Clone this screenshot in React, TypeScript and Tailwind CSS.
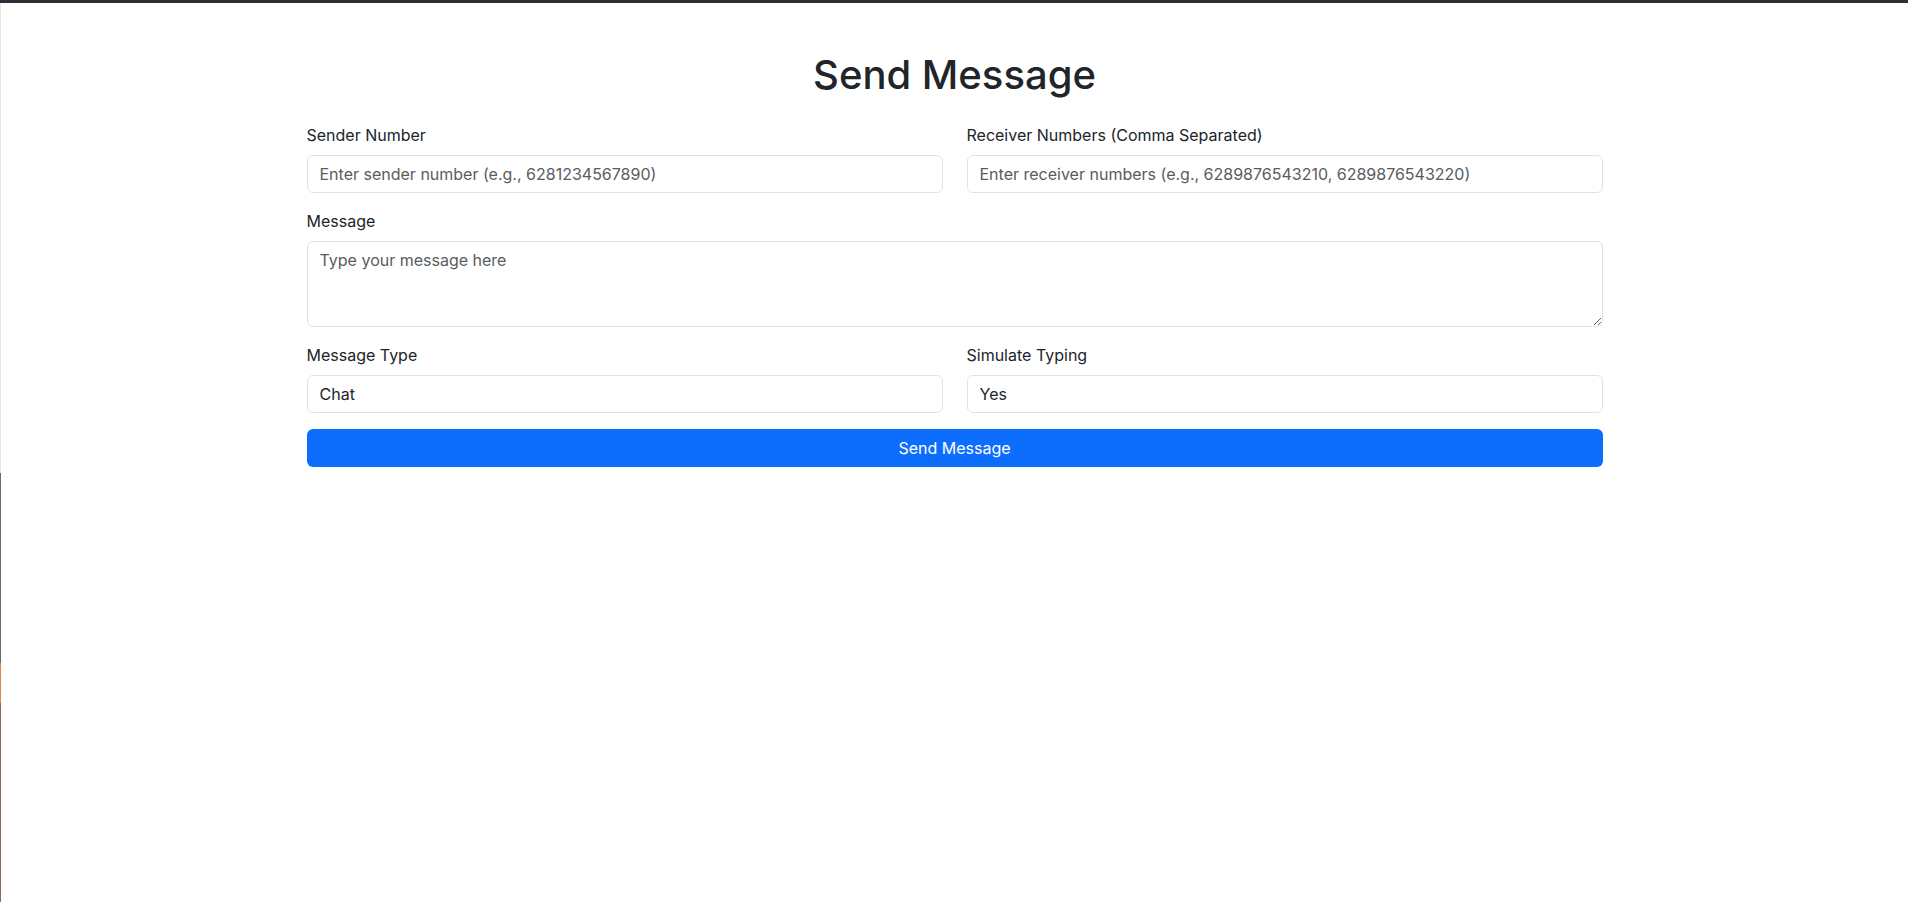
import React from "react";

const inputCls =
  "block w-full h-[38px] rounded-[6px] border border-[#dee2e6] bg-white px-3 py-1.5 text-base leading-6 text-[#212529] placeholder:text-[#595c5f] outline-none";

function Field({ label, children }: { label: string; children: React.ReactNode }) {
  return (
    <div className="mb-4">
      <label className="block mb-2 text-base leading-6">{label}</label>
      {children}
    </div>
  );
}

export default function App() {
  return (
    <div className="min-h-screen flex flex-col bg-white text-[#212529] font-['Inter','Liberation_Sans',sans-serif]">
      {/* window top edge */}
      <div className="h-[3px] bg-[#2e2f37]" />
      <div className="flex flex-1">
        {/* desktop peeking through on the left */}
        <div className="w-px flex flex-col">
          <div className="h-[470px] bg-[#f2e3d0]" />
          <div className="h-[190px] bg-[#6b6a66]" />
          <div className="h-[40px] bg-[#d9884f]" />
          <div className="flex-1 bg-[#8a6a58]" />
        </div>

        <main className="flex-1">
          <div className="mx-auto max-w-[1320px] px-3 pt-12">
            <h1 className="mb-6 text-center text-[40px] leading-[1.2] font-medium">
              Send Message
            </h1>

            <form onSubmit={(e) => e.preventDefault()}>
              <div className="grid grid-cols-2 gap-x-6">
                <Field label="Sender Number">
                  <input
                    className={inputCls}
                    placeholder="Enter sender number (e.g., 6281234567890)"
                  />
                </Field>
                <Field label="Receiver Numbers (Comma Separated)">
                  <input
                    className={inputCls}
                    placeholder="Enter receiver numbers (e.g., 6289876543210, 6289876543220)"
                  />
                </Field>
              </div>

              <Field label="Message">
                <textarea
                  rows={3}
                  className="block w-full h-[86px] rounded-[6px] border border-[#dee2e6] bg-white px-3 py-1.5 text-base leading-6 text-[#212529] placeholder:text-[#595c5f] outline-none resize-y"
                  placeholder="Type your message here"
                />
              </Field>

              <div className="grid grid-cols-2 gap-x-6">
                <Field label="Message Type">
                  <select className={`${inputCls} appearance-none`} defaultValue="chat">
                    <option value="chat">Chat</option>
                    <option value="image">Image</option>
                  </select>
                </Field>
                <Field label="Simulate Typing">
                  <select className={`${inputCls} appearance-none`} defaultValue="yes">
                    <option value="yes">Yes</option>
                    <option value="no">No</option>
                  </select>
                </Field>
              </div>

              <button
                type="submit"
                className="block w-full h-[38px] rounded-[6px] bg-[#0d6efd] text-white text-base leading-6"
              >
                Send Message
              </button>
            </form>
          </div>
        </main>
      </div>
    </div>
  );
}
